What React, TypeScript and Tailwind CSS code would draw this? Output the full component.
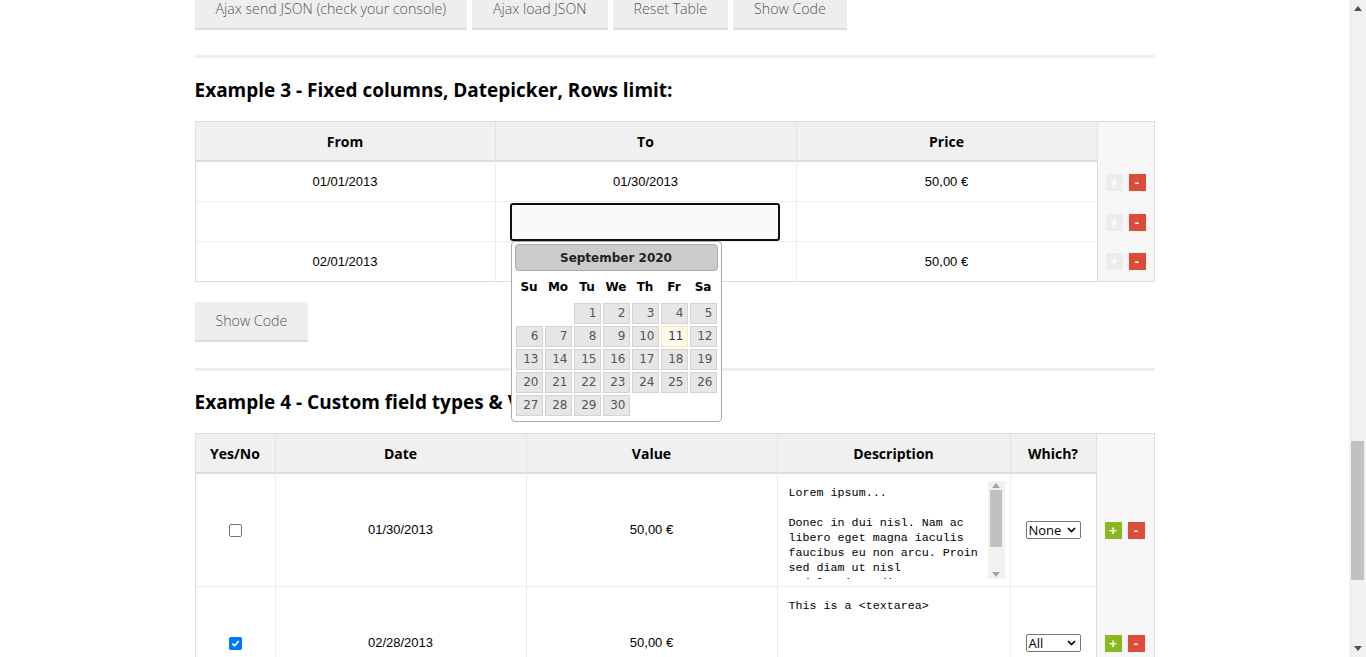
import type { ReactNode } from "react";

const ui = { fontFamily: '"Open Sans", "Liberation Sans", sans-serif' };
const arial = { fontFamily: '"Liberation Sans", Arial, sans-serif' };
const verdana = { fontFamily: '"DejaVu Sans", Verdana, sans-serif' };
const mono = { fontFamily: '"Liberation Mono", "Courier New", monospace' };

function GrayButton({ children }: { children: ReactNode }) {
  return (
    <button
      style={ui}
      className="h-[40px] border-b-2 border-[#dcdcdc] bg-[#eeeeee] px-[21px] text-[14.2px] font-light text-[#555]"
    >
      {children}
    </button>
  );
}

function RowButtons({ addEnabled }: { addEnabled: boolean }) {
  return (
    <div className="flex items-center gap-[6px]">
      <span
        style={arial}
        className={`flex h-[17px] w-[17px] items-center justify-center text-[13px] font-bold leading-none text-white ${
          addEnabled ? "bg-[#8ab81f]" : "bg-[#ececec]"
        }`}
      >
        +
      </span>
      <span
        style={arial}
        className="flex h-[17px] w-[17px] items-center justify-center bg-[#dd4b39] text-[13px] font-bold leading-none text-white"
      >
        -
      </span>
    </div>
  );
}

function Checkbox({ checked }: { checked: boolean }) {
  if (checked) {
    return (
      <span className="flex h-[13px] w-[13px] items-center justify-center rounded-[2px] bg-[#0075ff]">
        <svg width="9" height="9" viewBox="0 0 10 10">
          <path d="M1.5 5.2 L4 7.6 L8.6 2.2" stroke="white" strokeWidth="1.9" fill="none" />
        </svg>
      </span>
    );
  }
  return <span className="block h-[13px] w-[13px] rounded-[2px] border border-[#767676] bg-white" />;
}

function FakeSelect({ value }: { value: string }) {
  return (
    <div
      style={ui}
      className="flex h-[18px] w-[55px] items-center justify-between rounded-[2px] border border-[#767676] bg-white pl-[2px] pr-[4px] text-[13px] leading-none text-black"
    >
      <span>{value}</span>
      <svg width="9" height="6" viewBox="0 0 9 6">
        <path d="M1 1 L4.5 4.5 L8 1" stroke="black" strokeWidth="1.6" fill="none" />
      </svg>
    </div>
  );
}

function ScrollArrow({ up, color = "#a3a3a3" }: { up: boolean; color?: string }) {
  return (
    <svg width="8" height="5" viewBox="0 0 8 5">
      <path d={up ? "M0 5 L4 0 L8 5 Z" : "M0 0 L8 0 L4 5 Z"} fill={color} />
    </svg>
  );
}

const calendarWeeks: (number | null)[][] = [
  [null, null, 1, 2, 3, 4, 5],
  [6, 7, 8, 9, 10, 11, 12],
  [13, 14, 15, 16, 17, 18, 19],
  [20, 21, 22, 23, 24, 25, 26],
  [27, 28, 29, 30, null, null, null],
];

function Datepicker() {
  return (
    <div
      style={verdana}
      className="absolute left-[1px] top-full z-10 w-[211px] rounded-[4px] border border-[#aaaaaa] bg-white px-[3px] pt-[2px]"
    >
      <div className="flex h-[27px] items-center justify-center rounded-[4px] border border-[#aaaaaa] bg-[#cccccc] pt-[1px] text-[12px] font-bold text-[#222]">
        September 2020
      </div>
      <table className="mb-[4px] w-full border-collapse text-[12px]">
        <thead>
          <tr>
            {["Su", "Mo", "Tu", "We", "Th", "Fr", "Sa"].map((d) => (
              <th key={d} className="h-[31px] px-[2px] pt-[1px] text-center font-bold text-black">
                {d}
              </th>
            ))}
          </tr>
        </thead>
        <tbody>
          {calendarWeeks.map((week, wi) => (
            <tr key={wi}>
              {week.map((day, di) => (
                <td key={di} className="p-[1px]">
                  {day === null ? null : day === 11 ? (
                    <span className="block h-[21px] border border-[#fcefa1] bg-[#fbf9ee] px-[3px] text-right leading-[19px] text-[#363636]">
                      {day}
                    </span>
                  ) : (
                    <span className="block h-[21px] border border-[#d3d3d3] bg-[#e6e6e6] px-[3px] text-right leading-[19px] text-[#555]">
                      {day}
                    </span>
                  )}
                </td>
              ))}
            </tr>
          ))}
        </tbody>
      </table>
    </div>
  );
}

function HeadCell({ label, className }: { label: string; className: string }) {
  return (
    <div
      style={ui}
      className={`flex h-[40px] items-center justify-center border-b-2 border-r border-b-[#dddddd] border-r-[#e2e2e2] bg-[#f0f0f0] text-[14px] font-bold text-black ${className}`}
    >
      {label}
    </div>
  );
}

function Example3Table() {
  const rows = [
    { from: "01/01/2013", to: "01/30/2013", price: "50,00 €" },
    { from: "", to: null, price: "" },
    { from: "02/01/2013", to: "", price: "50,00 €" },
  ];
  return (
    <div className="flex border border-[#dddddd]">
      <div className="flex flex-1 flex-col">
        <div className="flex">
          <HeadCell label="From" className="w-[300px]" />
          <HeadCell label="To" className="w-[301px]" />
          <HeadCell label="Price" className="w-[301px]" />
        </div>
        {rows.map((r, i) => {
          const last = i === rows.length - 1;
          return (
            <div
              key={i}
              style={arial}
              className={`flex text-[13px] text-black ${last ? "h-[39px]" : "h-[40px] border-b border-[#ececec]"}`}
            >
              <div className="flex w-[300px] items-center justify-center border-r border-[#ececec]">{r.from}</div>
              <div className="flex w-[301px] items-center justify-center border-r border-[#ececec] px-[14px]">
                {r.to === null ? (
                  <div className="relative w-full">
                    <div className="h-[38px] w-[270px] rounded-[3px] border-2 border-[#111] bg-[#fafafa]" />
                    <Datepicker />
                  </div>
                ) : (
                  r.to
                )}
              </div>
              <div className="flex w-[301px] items-center justify-center border-r border-[#dddddd]">{r.price}</div>
            </div>
          );
        })}
      </div>
      <div className="flex w-[57px] flex-col bg-[#f7f7f7] pl-[8px]">
        <div className="h-[40px]" />
        {rows.map((_, i) => (
          <div key={i} className={`flex items-center ${i === rows.length - 1 ? "h-[39px]" : "h-[40px]"}`}>
            <RowButtons addEnabled={false} />
          </div>
        ))}
      </div>
    </div>
  );
}

function TextArea({ lines, scroll }: { lines: string[]; scroll: boolean }) {
  return (
    <div className="flex h-[98px] w-[225px] overflow-hidden bg-white">
      <div style={mono} className="flex-1 overflow-hidden pl-[9px] pt-[5px] text-[11.7px] leading-[15px] text-black">
        {lines.map((l, i) => (
          <div key={i} className="h-[15px] whitespace-pre">
            {l}
          </div>
        ))}
      </div>
      {scroll ? (
        <div className="flex w-[17px] flex-col items-center bg-[#f1f1f1]">
          <div className="flex h-[17px] items-center justify-center">
            <ScrollArrow up />
          </div>
          <div className="w-[12px] flex-1 pb-[24px]">
            <div className="h-[57px] w-full bg-[#c1c1c1]" />
          </div>
          <div className="flex h-[17px] items-center justify-center">
            <ScrollArrow up={false} />
          </div>
        </div>
      ) : null}
    </div>
  );
}

function Example4Table() {
  const rows = [
    {
      checked: false,
      date: "01/30/2013",
      value: "50,00 €",
      lines: [
        "Lorem ipsum...",
        "",
        "Donec in dui nisl. Nam ac",
        "libero eget magna iaculis",
        "faucibus eu non arcu. Proin",
        "sed diam ut nisl",
        "sodales imperdiet at ut",
      ],
      scroll: true,
      which: "None",
    },
    {
      checked: true,
      date: "02/28/2013",
      value: "50,00 €",
      lines: ["This is a <textarea>"],
      scroll: false,
      which: "All",
    },
  ];
  return (
    <div className="flex border border-[#dddddd]">
      <div className="flex flex-1 flex-col">
        <div className="flex">
          <HeadCell label="Yes/No" className="w-[80px]" />
          <HeadCell label="Date" className="w-[251px]" />
          <HeadCell label="Value" className="w-[251px]" />
          <HeadCell label="Description" className="w-[233px]" />
          <HeadCell label="Which?" className="w-[86px]" />
        </div>
        {rows.map((r, i) => (
          <div key={i} style={arial} className="flex h-[113px] border-b border-[#ececec] text-[13px] text-black">
            <div className="flex w-[80px] items-center justify-center border-r border-[#ececec]">
              <Checkbox checked={r.checked} />
            </div>
            <div className="flex w-[251px] items-center justify-center border-r border-[#ececec]">{r.date}</div>
            <div className="flex w-[251px] items-center justify-center border-r border-[#ececec]">{r.value}</div>
            <div className="w-[233px] border-r border-[#ececec] pl-[2px] pt-[7px]">
              <TextArea lines={r.lines} scroll={r.scroll} />
            </div>
            <div className="flex w-[86px] items-center justify-center border-r border-[#dddddd]">
              <FakeSelect value={r.which} />
            </div>
          </div>
        ))}
      </div>
      <div className="flex w-[57px] flex-col bg-[#f7f7f7] pl-[8px]">
        <div className="h-[40px]" />
        {rows.map((_, i) => (
          <div key={i} className="flex h-[113px] items-center">
            <RowButtons addEnabled />
          </div>
        ))}
      </div>
    </div>
  );
}

export default function App() {
  return (
    <div className="flex h-[657px] w-[1366px] overflow-hidden bg-white">
      <div className="min-w-0 flex-1 overflow-hidden">
        <div className="mx-auto mt-[-10px] w-[960px]">
          <div className="flex gap-[5px]">
            <GrayButton>Ajax send JSON (check your console)</GrayButton>
            <GrayButton>Ajax load JSON</GrayButton>
            <GrayButton>Reset Table</GrayButton>
            <GrayButton>Show Code</GrayButton>
          </div>

          <div className="mt-[25px] h-[3px] bg-[#eeeeee]" />

          <h3 style={ui} className="mt-[18px] h-[28px] text-[19px] font-bold leading-[28px] text-black">
            Example 3 - Fixed columns, Datepicker, Rows limit:
          </h3>

          <div className="mt-[17px]">
            <Example3Table />
          </div>

          <div className="mt-[20px]">
            <GrayButton>Show Code</GrayButton>
          </div>

          <div className="mt-[26px] h-[3px] bg-[#eeeeee]" />

          <h3 style={ui} className="mt-[17px] h-[28px] text-[19px] font-bold leading-[28px] text-black">
            Example 4 - Custom field types &amp; Validation:
          </h3>

          <div className="mt-[17px]">
            <Example4Table />
          </div>
        </div>
      </div>

      <div className="flex w-[17px] flex-col bg-[#f1f1f1]">
        <div className="flex h-[17px] items-center justify-center">
          <ScrollArrow up color="#505050" />
        </div>
        <div className="flex flex-1 justify-center pt-[424px]">
          <div className="h-[139px] w-[13px] bg-[#c1c1c1]" />
        </div>
        <div className="flex h-[17px] items-center justify-center">
          <ScrollArrow up={false} color="#505050" />
        </div>
      </div>
    </div>
  );
}
